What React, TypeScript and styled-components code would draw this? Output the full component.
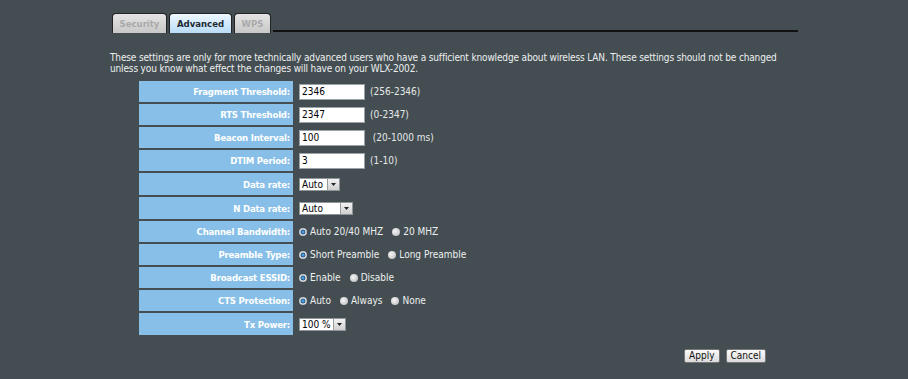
import styled, { createGlobalStyle } from "styled-components";

const GlobalStyle = createGlobalStyle`
  html, body {
    margin: 0;
    padding: 0;
    background: #434d52;
  }
  body {
    font-family: "DejaVu Sans Condensed", "DejaVu Sans", sans-serif;
    font-size: 10px;
    color: #eef0f0;
  }
`;

type Row = {
  label: string;
  kind: "text" | "select" | "radio";
  value?: string;
  hint?: string;
  width?: number;
  options?: string[];
};

const rows: Row[] = [
  { label: "Fragment Threshold:", kind: "text", value: "2346", hint: "(256-2346)" },
  { label: "RTS Threshold:", kind: "text", value: "2347", hint: "(0-2347)" },
  { label: "Beacon Interval:", kind: "text", value: "100", hint: " (20-1000 ms)" },
  { label: "DTIM Period:", kind: "text", value: "3", hint: "(1-10)" },
  { label: "Data rate:", kind: "select", value: "Auto", width: 41 },
  { label: "N Data rate:", kind: "select", value: "Auto", width: 54 },
  { label: "Channel Bandwidth:", kind: "radio", options: ["Auto 20/40 MHZ", "20 MHZ"] },
  { label: "Preamble Type:", kind: "radio", options: ["Short Preamble", "Long Preamble"] },
  { label: "Broadcast ESSID:", kind: "radio", options: ["Enable", "Disable"] },
  { label: "CTS Protection:", kind: "radio", options: ["Auto", "Always", "None"] },
  { label: "Tx Power:", kind: "select", value: "100 %", width: 47 },
];

export default function App() {
  return (
    <Page>
      <GlobalStyle />
      <TabBar>
        <Tab $w={55}>Security</Tab>
        <Tab $w={63} $active>
          Advanced
        </Tab>
        <Tab $w={37}>WPS</Tab>
        <TabLine />
      </TabBar>
      <Intro>
        These settings are only for more technically advanced users who have a
        sufficient knowledge about wireless LAN. These settings should not be
        changed unless you know what effect the changes will have on your
        WLX-2002.
      </Intro>
      <Table>
        {rows.map((r) => (
          <FormRow key={r.label} $tall={r.kind === "select"}>
            <Label>{r.label}</Label>
            <Value>
              {r.kind === "text" && (
                <>
                  <TextBox>{r.value}</TextBox>
                  <Hint>{r.hint}</Hint>
                </>
              )}
              {r.kind === "select" && (
                <Select style={{ width: r.width }}>
                  <span>{r.value}</span>
                  <Arrow>
                    <svg width="5" height="3" viewBox="0 0 5 3">
                      <path d="M0 0h5L2.5 3z" fill="#222" />
                    </svg>
                  </Arrow>
                </Select>
              )}
              {r.kind === "radio" &&
                r.options!.map((o, i) => (
                  <RadioLabel key={o}>
                    <Radio $checked={i === 0} />
                    {o}
                  </RadioLabel>
                ))}
            </Value>
          </FormRow>
        ))}
      </Table>
      <Actions>
        <Button>Apply</Button>
        <Button>Cancel</Button>
      </Actions>
    </Page>
  );
}

const Page = styled.div`
  width: 908px;
  height: 379px;
  box-sizing: border-box;
  padding: 13px 0 0 110px;
  overflow: hidden;
`;

const TabBar = styled.div`
  display: flex;
  align-items: flex-end;
  gap: 2px;
  width: 686px;
  margin-left: 2px;
`;

const Tab = styled.div<{ $active?: boolean; $w: number }>`
  width: ${(p) => p.$w}px;
  box-sizing: border-box;
  height: 20px;
  display: flex;
  align-items: center;
  justify-content: center;
  border: 1px solid #222;
  border-bottom: none;
  border-radius: 4px 4px 0 0;
  font-weight: bold;
  font-size: 9.5px;
  color: ${(p) => (p.$active ? "#1e2a33" : "#a9a9a9")};
  background: ${(p) =>
    p.$active
      ? "linear-gradient(#eef7ff, #b9dcf6)"
      : "linear-gradient(#e4e4e4, #c8c8c8)"};
`;

const TabLine = styled.div`
  flex: 1;
  height: 2px;
  background: #111;
  margin-bottom: 1px;
`;

const Intro = styled.p`
  margin: 19px 0 0;
  width: 690px;
  line-height: 11px;
  font-size: 10px;
  letter-spacing: -0.15px;
  color: #eef0f0;
`;

const Table = styled.div`
  margin: 7px 0 0 29px;
  display: flex;
  flex-direction: column;
  gap: 2px;
`;

const FormRow = styled.div<{ $tall?: boolean }>`
  display: grid;
  grid-template-columns: 154px 1fr;
  gap: 6px;
  height: ${(p) => (p.$tall ? "22px" : "21px")};
`;

const Label = styled.div`
  background: #88bfe8;
  color: #fff;
  font-weight: bold;
  font-size: 9.5px;
  letter-spacing: -0.2px;
  padding-right: 3px;
  display: flex;
  align-items: center;
  justify-content: flex-end;
`;

const Value = styled.div`
  display: flex;
  align-items: center;
  gap: 5px;
`;

const TextBox = styled.div`
  width: 62px;
  height: 14px;
  background: #fff;
  border: 1px solid #9aa3a8;
  color: #000;
  padding-left: 2px;
  display: flex;
  align-items: center;
`;

const Hint = styled.span`
  color: #e6e8e8;
  white-space: pre;
`;

const Select = styled.div`
  height: 13px;
  background: #fff;
  border: 1px solid #8e969a;
  color: #000;
  display: flex;
  align-items: center;
  justify-content: space-between;
  padding-left: 2px;
  box-sizing: border-box;
`;

const Arrow = styled.span`
  width: 11px;
  height: 11px;
  background: linear-gradient(#f2f2f2, #d0d0d0);
  border-left: 1px solid #9a9a9a;
  display: flex;
  align-items: center;
  justify-content: center;
`;

const RadioLabel = styled.label`
  display: flex;
  align-items: center;
  gap: 3px;
  margin-right: 4px;
  color: #eef0f0;
`;

const Radio = styled.span<{ $checked?: boolean }>`
  width: 8px;
  height: 8px;
  border-radius: 50%;
  background: ${(p) =>
    p.$checked
      ? "radial-gradient(circle, #4a9ae0 0 1.2px, #1b4468 2px, #dfe4e8 2.8px, #b8bec2 4px)"
      : "radial-gradient(circle at 40% 40%, #f6f6f6, #c8c8c8 70%, #aeb2b4)"};
`;

const Actions = styled.div`
  display: flex;
  gap: 6px;
  justify-content: flex-end;
  width: 656px;
  margin-top: 14px;
`;

const Button = styled.button`
  font-family: "DejaVu Sans Condensed", "DejaVu Sans", sans-serif;
  font-size: 10px;
  height: 14px;
  padding: 0 4px;
  background: linear-gradient(#fafafa, #dcdcdc);
  border: 1px solid #777;
  border-radius: 2px;
  color: #111;
  line-height: 12px;
`;
